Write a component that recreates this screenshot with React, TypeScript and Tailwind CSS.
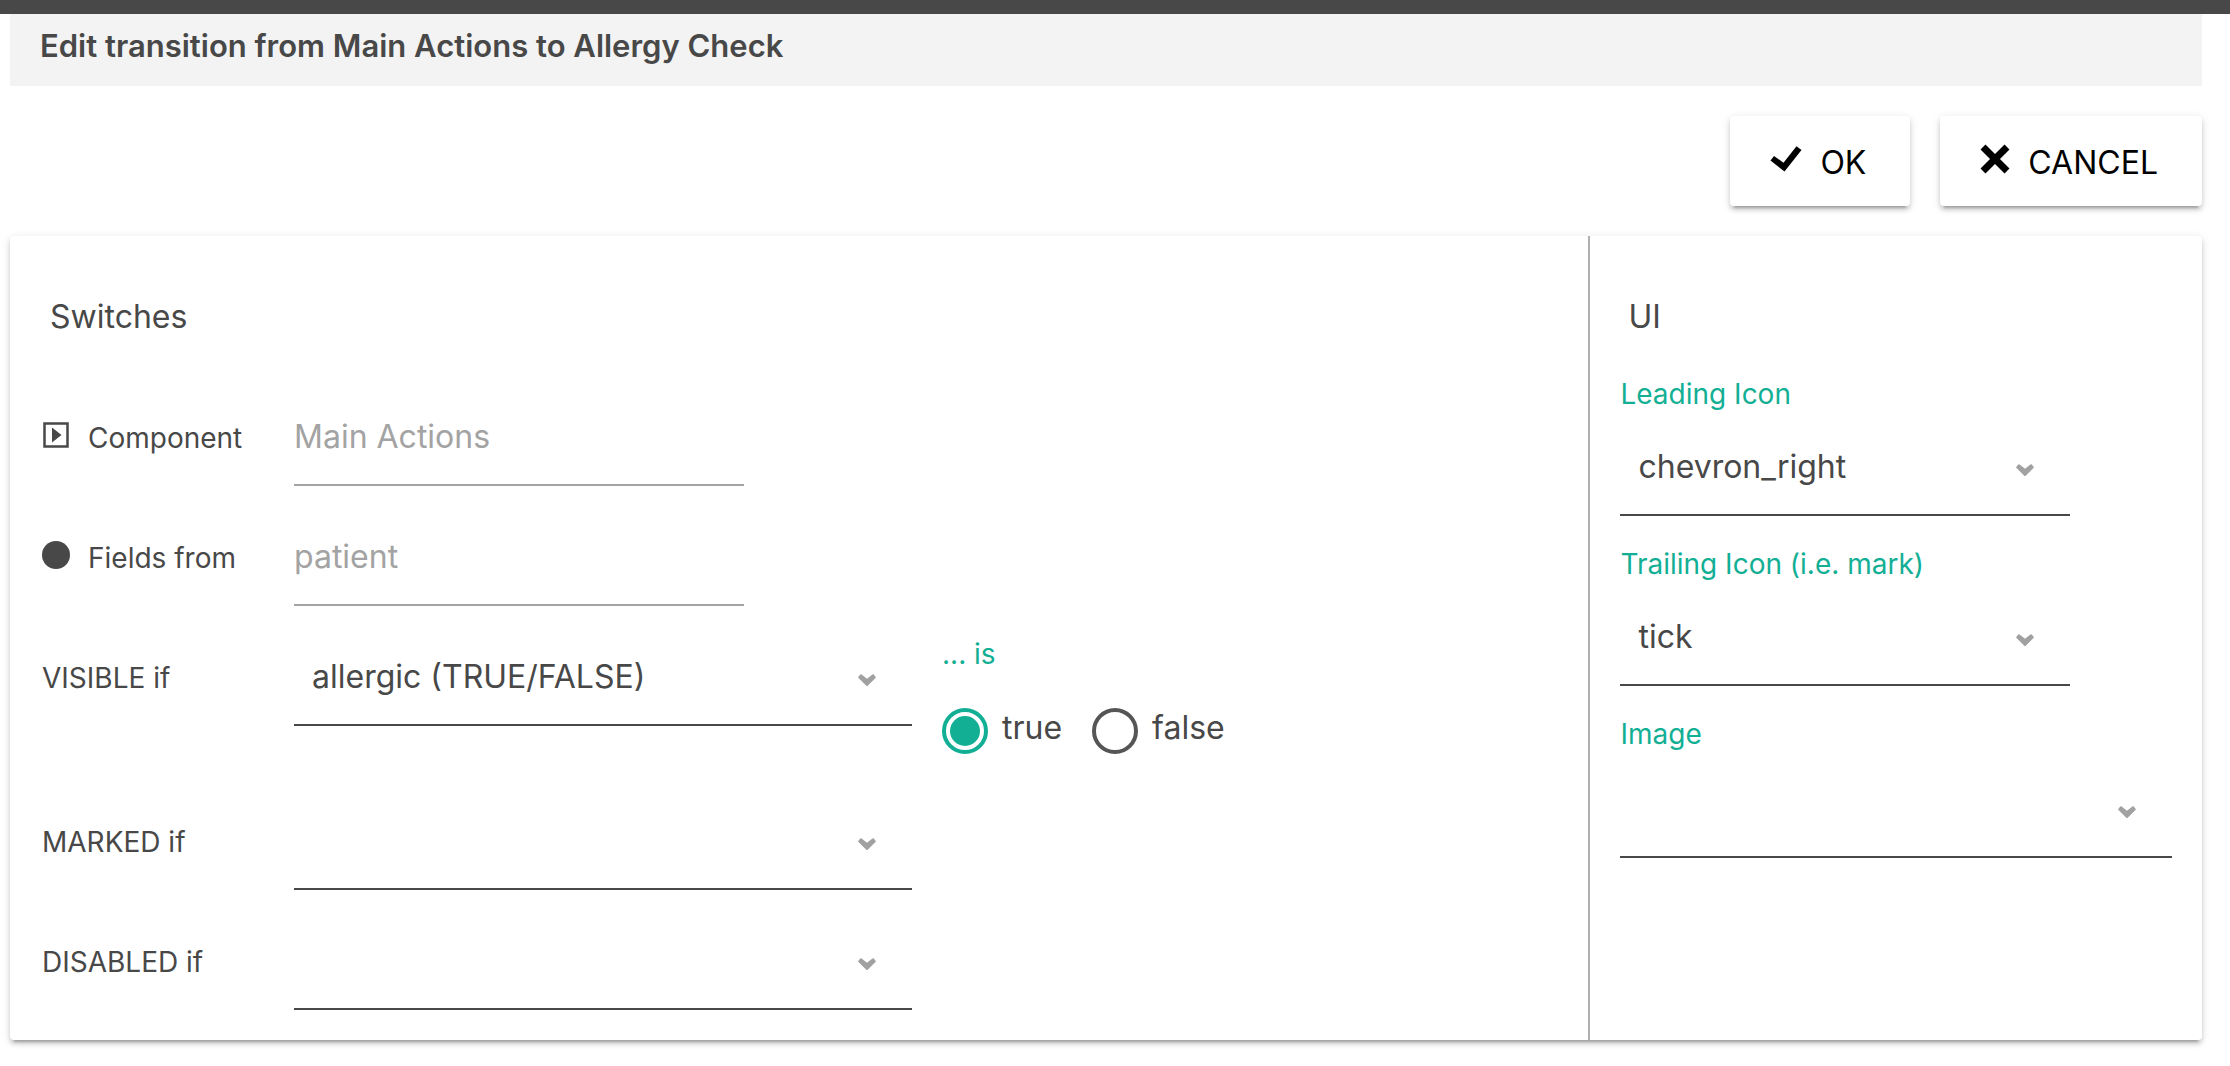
import { useState } from 'react';
import type { ReactNode } from 'react';
import clsx from 'clsx';

const elevation =
  'shadow-[0_6px_2px_-4px_rgba(0,0,0,0.2),0_4px_4px_0_rgba(0,0,0,0.14),0_2px_10px_0_rgba(0,0,0,0.12)]';

function Chevron() {
  return (
    <svg
      viewBox="0 0 18 12"
      className="pointer-events-none absolute right-9 bottom-10 h-3 w-[18px]"
      aria-hidden="true"
    >
      <path
        d="M3 1.200 9 6 15 1.200 16.800 3.300 9 11 1.200 3.300Z"
        fill="#a1a1a1"
        stroke="#a1a1a1"
        strokeWidth="2"
        strokeLinejoin="round"
      />
    </svg>
  );
}

type SelectProps = { id: string; options: string[]; className?: string };

function Select({ id, options, className }: SelectProps) {
  return (
    <div className={clsx('relative', className)}>
      <select
        id={id}
        className="h-[98px] w-full appearance-none border-b-2 border-[#484848] bg-transparent pt-0.5 pr-16 pl-[18px] text-[32px] outline-none"
      >
        {options.map((option) => (
          <option key={option} value={option}>
            {option}
          </option>
        ))}
      </select>
      <Chevron />
    </div>
  );
}

type RowProps = { id: string; label: string; icon?: ReactNode; children: ReactNode };

function Row({ id, label, icon, children }: RowProps) {
  return (
    <div className="flex items-start">
      <label htmlFor={id} className="flex h-[98px] w-[252px] shrink-0 items-center pt-0.5 text-[28px]">
        {icon && <span className="flex w-[46px] shrink-0 pb-1.5">{icon}</span>}
        {label}
      </label>
      {children}
    </div>
  );
}

function ReadOnly({ id, value }: { id: string; value: string }) {
  return (
    <input
      id={id}
      disabled
      value={value}
      className="h-[98px] w-[450px] border-b-2 border-[#a3a3a3] text-[32px] text-[#a3a3a3]"
    />
  );
}

function UiField({ id, label, options, className }: SelectProps & { label: string }) {
  return (
    <div>
      <label htmlFor={id} className="block text-[28px] leading-10 text-[#12af95]">
        {label}
      </label>
      <Select id={id} options={options} className={clsx('mt-1', className)} />
    </div>
  );
}

function ActionButton({ icon, children }: { icon: ReactNode; children: ReactNode }) {
  return (
    <button
      className={clsx(
        'flex h-[90px] items-center gap-[18px] rounded-sm bg-white pt-1 pr-11 pl-10 text-[32px]',
        elevation,
      )}
    >
      <span className="mb-2">{icon}</span>
      {children}
    </button>
  );
}

export default function App() {
  const [visible, setVisible] = useState('true');

  return (
    <main className="bg-white pb-6 font-['Inter',sans-serif] text-[#484848]">
      <div className="h-3.5 bg-[#484848]" />

      <div className="mr-7 ml-2.5">
        <header className="bg-[#f3f3f3] px-[30px] pt-3 pb-5">
          <h1 className="text-[31px] leading-10 font-semibold">
            Edit transition from Main Actions to Allergy Check
          </h1>
        </header>

        <div className="flex justify-end gap-[30px] py-[30px] text-black">
          <ActionButton
            icon={
              <svg viewBox="0 0 32 26" className="h-[26px] w-8" aria-hidden="true">
                <path d="M0.500 14.500 4 10 13.500 16.800 26.500 0.300 31.500 4 14.500 25.500Z" />
              </svg>
            }
          >
            OK
          </ActionButton>
          <ActionButton
            icon={
              <svg viewBox="0 0 30 30" className="size-[30px]" aria-hidden="true">
                <path d="M3 3 27 27M27 3 3 27" stroke="currentColor" strokeWidth="7" />
              </svg>
            }
          >
            CANCEL
          </ActionButton>
        </div>

        <form className={clsx('flex rounded-sm', elevation)}>
          <section className="flex-1 border-r-2 border-[#b0b0b0] px-8 pt-[60px] pb-[30px]">
            <h2 className="pl-2 text-[32px] leading-[42px]">Switches</h2>

            <div className="mt-[50px] flex flex-col gap-[22px]">
              <Row
                id="component"
                label="Component"
                icon={
                  <svg viewBox="0 0 28 28" className="size-7" aria-hidden="true">
                    <path d="M2.500 2.500H25.500V25.500H2.500Z" fill="none" stroke="currentColor" strokeWidth="2.500" />
                    <path d="M10 6.500 19.500 14 10 21.500Z" fill="currentColor" />
                  </svg>
                }
              >
                <ReadOnly id="component" value="Main Actions" />
              </Row>
              <Row id="fields" label="Fields from" icon={<span className="size-7 rounded-full bg-[#484848]" />}>
                <ReadOnly id="fields" value="patient" />
              </Row>
              <Row id="visible" label="VISIBLE if">
                <Select id="visible" options={['allergic (TRUE/FALSE)']} className="w-[618px]" />
                <fieldset className="h-[142px] pl-[30px]">
                  <legend className="pt-1.5 text-[28px] leading-10 text-[#12af95]">... is</legend>
                  <div className="flex gap-[30px] pt-[34px]">
                    {['true', 'false'].map((value) => (
                      <label key={value} className="flex items-start gap-[14px] text-[32px] leading-10">
                        <input
                          type="radio"
                          name="visible-value"
                          value={value}
                          checked={visible === value}
                          onChange={() => setVisible(value)}
                          className="size-[46px] appearance-none rounded-full border-4 border-[#555] bg-clip-content p-1 checked:border-[#12af95] checked:bg-[#12af95]"
                        />
                        {value}
                      </label>
                    ))}
                  </div>
                </fieldset>
              </Row>
              <Row id="marked" label="MARKED if">
                <Select id="marked" options={['']} className="w-[618px]" />
              </Row>
              <Row id="disabled" label="DISABLED if">
                <Select id="disabled" options={['']} className="w-[618px]" />
              </Row>
            </div>
          </section>

          <section className="w-[27.9%] px-[30px] pt-[60px]">
            <h2 className="pl-2 text-[32px] leading-[42px]">UI</h2>
            <div className="mt-9 flex flex-col gap-7">
              <UiField id="leading" label="Leading Icon" options={['chevron_right']} className="w-[450px]" />
              <UiField id="trailing" label="Trailing Icon (i.e. mark)" options={['tick']} className="w-[450px]" />
              <UiField id="image" label="Image" options={['']} className="pt-0.5" />
            </div>
          </section>
        </form>
      </div>
    </main>
  );
}
